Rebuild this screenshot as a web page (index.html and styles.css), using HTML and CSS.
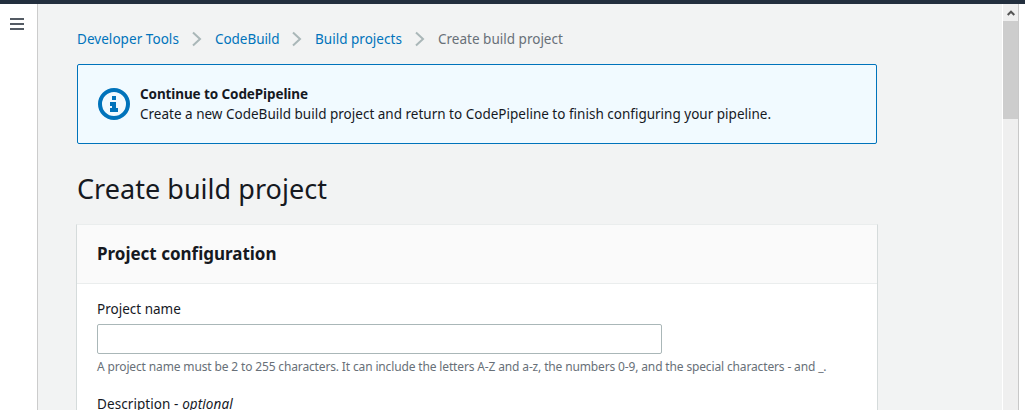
FILE: index.html
```html
<!DOCTYPE html>
<html lang="en">
<head>
<meta charset="utf-8">
<title>Create build project</title>
<link rel="stylesheet" href="styles.css">
</head>
<body>
<div class="topbar"></div>
<div class="shell">
  <aside class="rail">
    <svg class="menu" width="14" height="12" viewBox="0 0 14 12" shape-rendering="crispEdges"><path d="M0 1h14M0 6h14M0 11h14" stroke="#545b64" stroke-width="2"/></svg>
  </aside>
  <main class="content">
    <nav class="crumbs">
      <a class="crumb c1">Developer Tools</a>
      <svg class="sep" width="10" height="16" viewBox="0 0 10 16"><path d="M1 1.5L8 8L1 14.5"/></svg>
      <a class="crumb c2">CodeBuild</a>
      <svg class="sep" width="10" height="16" viewBox="0 0 10 16"><path d="M1 1.5L8 8L1 14.5"/></svg>
      <a class="crumb c3">Build projects</a>
      <svg class="sep" width="10" height="16" viewBox="0 0 10 16"><path d="M1 1.5L8 8L1 14.5"/></svg>
      <span class="crumb current">Create build project</span>
    </nav>
    <section class="alert">
      <svg class="info" width="32" height="32" viewBox="0 0 32 32"><circle cx="16" cy="16" r="14" fill="none" stroke="#0073bb" stroke-width="4"/><path d="M14 8h4v4h-4zM12 14h6v6h2v4h-8v-4h2v-2h-2z" fill="#0073bb"/></svg>
      <div class="alert-text">
        <div><strong class="alert-title">Continue to CodePipeline</strong></div>
        <div><span class="alert-body">Create a new CodeBuild build project and return to CodePipeline to finish configuring your pipeline.</span></div>
      </div>
    </section>
    <h1 class="title">Create build project</h1>
    <section class="card">
      <header class="card-head"><h2 class="card-title">Project configuration</h2></header>
      <div class="card-body">
        <label class="label name-label" for="name">Project name</label>
        <input class="input" id="name" type="text">
        <p class="hint">A project name must be 2 to 255 characters. It can include the letters A-Z and a-z, the numbers 0-9, and the special characters - and _.</p>
        <div class="label desc-label">Description - <em>optional</em></div>
      </div>
    </section>
  </main>
  <div class="scrollbar">
    <div class="up"><svg width="8" height="6" viewBox="0 0 8 6"><path d="M0.7 5L4 1.7L7.3 5" fill="none" stroke="#555" stroke-width="2"/></svg></div>
    <div class="thumb"></div>
  </div>
</div>
</body>
</html>
```
FILE: styles.css
```css
* { box-sizing: border-box; }
body {
  margin: 0;
  height: 410px;
  overflow: hidden;
  background: #fff;
  color: #16191f;
  font: 14px/20px "Noto Sans", "Open Sans", sans-serif;
  white-space: nowrap;
}
.topbar { height: 4px; background: #232f3e; }
.shell { display: flex; height: 406px; width: 1019px; }
.rail { width: 38px; flex: none; border-right: 1px solid #ccc; padding: 14px 0 0 10px; }
.menu { display: block; }
.content { width: 964px; flex: none; background: #f2f3f3; padding: 25px 0 0 38px; overflow: hidden; }
.crumbs { display: flex; align-items: center; height: 20px; margin-left: 1px; }
.crumb { color: #0073bb; flex: none; font-size: 13.5px; }
.c1 { width: 115px; letter-spacing: 0.05px; }
.c2 { width: 77px; letter-spacing: -0.05px; }
.c3 { width: 100px; letter-spacing: 0.02px; }
.current { color: #687078; letter-spacing: 0.01px; }
.sep { flex: none; margin-right: 13px; fill: none; stroke: #aab7b8; stroke-width: 2; }
.alert {
  display: flex;
  align-items: center;
  width: 800px;
  height: 80px;
  margin: 15px 0 0 1px;
  padding-left: 20px;
  background: #f1faff;
  border: 1px solid #0073bb;
  border-radius: 2px;
}
.info { flex: none; margin-right: 10px; }
.alert-title { font-size: 13.5px; letter-spacing: -0.1px; }
.alert-body { font-size: 13.5px; letter-spacing: 0.005px; }
.title { margin: 27px 0 0 1px; font-size: 27px; line-height: 36px; font-weight: 400; letter-spacing: 0.03px; }
.card { width: 802px; height: 240px; margin-top: 17px; background: #fff; border: 1px solid #d5dbdb; border-top-color: #eaeded; }
.card-head { height: 59px; padding: 18px 20px 0; background: #fafafa; border-bottom: 1px solid #eaeded; }
.card-title { margin: 0; font-size: 17px; line-height: 22px; font-weight: 700; letter-spacing: -0.01px; }
.card-body { padding: 15px 20px 0; }
.label { display: block; width: max-content; font-size: 13.5px; letter-spacing: 0.01px; }
.input { display: block; width: 565px; height: 30px; margin-top: 5px; border: 1px solid #aab7b8; border-radius: 2px; background: #fff; }
.hint { width: max-content; margin: 4px 0 0; font-size: 12px; line-height: 18px; color: #687078; letter-spacing: -0.145px; }
.desc-label { margin-top: 18px; letter-spacing: 0.08px; }
.scrollbar { width: 17px; flex: none; border-left: 1px solid #fff; border-right: 1px solid #c8c8c8; background: #efefef; }
.up { height: 17px; padding: 6px 0 0 4px; }
.up svg { display: block; }
.thumb { height: 98px; background: #cdcdcd; }
```
